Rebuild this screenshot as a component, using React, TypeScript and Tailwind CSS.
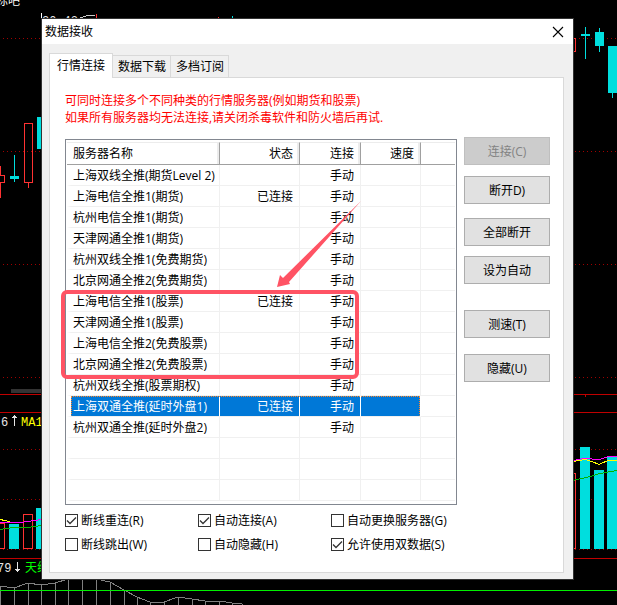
import { useState } from 'react'
import clsx from 'clsx'

interface Server {
  name: string
  status?: string
  mode?: string
}

const SERVERS: Server[] = [
  { name: '上海双线全推(期货Level 2)', mode: '手动' },
  { name: '上海电信全推1(期货)', status: '已连接', mode: '手动' },
  { name: '杭州电信全推1(期货)', mode: '手动' },
  { name: '天津网通全推1(期货)', mode: '手动' },
  { name: '杭州双线全推1(免费期货)', mode: '手动' },
  { name: '北京网通全推2(免费期货)', mode: '手动' },
  { name: '上海电信全推1(股票)', status: '已连接', mode: '手动' },
  { name: '天津网通全推1(股票)', mode: '手动' },
  { name: '上海电信全推2(免费股票)', mode: '手动' },
  { name: '北京网通全推2(免费股票)', mode: '手动' },
  { name: '杭州双线全推(股票期权)', mode: '手动' },
  { name: '上海双通全推(延时外盘1)', status: '已连接', mode: '手动' },
  { name: '杭州双通全推(延时外盘2)', mode: '手动' },
]

// empty rows that fill the rest of the list
const BLANK_ROWS = [0, 1, 2]

const TABS = ['行情连接', '数据下载', '多档订阅']

const COLUMNS = ['服务器名称', '状态', '连接', '速度']

const OPTIONS = [
  { id: 'reconnect', label: '断线重连(R)', checked: true },
  { id: 'auto-connect', label: '自动连接(A)', checked: true },
  { id: 'auto-switch', label: '自动更换服务器(G)', checked: false },
  { id: 'popup', label: '断线跳出(W)', checked: false },
  { id: 'auto-hide', label: '自动隐藏(H)', checked: false },
  { id: 'dual-data', label: '允许使用双数据(S)', checked: true },
]

const WAVE = [
  [0, 586], [14, 588], [28, 583], [41, 585], [55, 583], [68, 579], [82, 577], [96, 579], [110, 582], [124, 590],
  [137, 597], [150, 602], [164, 602], [178, 597], [192, 599], [205, 601], [219, 601], [232, 603], [242, 604],
]

function ChartBackdrop() {
  return (
    <svg
      className="absolute inset-0 h-full w-full"
      viewBox="0 0 617 605"
      preserveAspectRatio="none"
      shapeRendering="crispEdges"
      aria-hidden="true"
    >
      {[38, 151, 264, 377, 449, 499, 549].map((y) => (
        <path key={y} d={`M3 ${y}.5H617`} stroke="#a00000" strokeDasharray="1 3" />
      ))}
      <path d="M0 394.5H617M0 412.5H617M0 558.5H617M585.5 394V397" stroke="#c00000" />
      <rect x="11" y="389" width="30" height="4" fill="#333" />

      {/* candles */}
      <g fill="none" stroke="#ff3232">
        <path d="M0.5 166V175M0.5 183V198M0 175.5H4.5V182.5H0" />
        <path d="M24.5 123.5H32.5V182.5H24.5ZM28.5 183V188" />
        <path d="M96.5 14V18M218.5 17V18M573 38.5H575.5V51.5H573" />
        <path d="M0 523.5H4.5V548.5H0M23.5 514.5H32.5V548.5H23.5ZM573 473.5H575.5V548.5H573" />
      </g>
      <g fill="#00dede">
        <rect x="14" y="155" width="1" height="27" />
        <rect x="10" y="176" width="9" height="3" />
        <rect x="37" y="117" width="5" height="32" />
        <rect x="232" y="16" width="1" height="2" />
        <rect x="585" y="27" width="1" height="32" />
        <rect x="581" y="34" width="9" height="2" />
        <rect x="599" y="28" width="1" height="24" />
        <rect x="595" y="32" width="9" height="14" />
        <rect x="608" y="46" width="9" height="47" />
        <rect x="612" y="93" width="1" height="5" />
        <rect x="9" y="524" width="10" height="25" />
        <rect x="36" y="508" width="6" height="41" />
        <rect x="580" y="447" width="10" height="102" />
        <rect x="594" y="470" width="10" height="79" />
        <rect x="607" y="456" width="10" height="93" />
      </g>

      <g fill="none">
        <path d="M0 519.5L5 520.5L12 522.5M573 461.5L585 459.5L592 461.5L599 464.5L608 460.5H617" stroke="#ff0" />
        <path d="M0 522.5H20L28 521.5L41 519.5M573 460.5L584 458.5L600 459.5L608 456.5H617" stroke="#f0f" />
        <path d="M0 529.5L14 527.5H28L41 525.5M573 480.5L590 476.5L600 473.5L617 470.5" stroke="#00b400" />
        <path d="M41.5 13V18" stroke="#fff" />
        <path d="M80 18L88 15.5H95" stroke="#ccc" />
        <path d={`M${WAVE.map((p) => p.join(' ')).join('L')}`} stroke="#808080" />
        <path d={WAVE.map(([x, y]) => `M${x}.5 ${y}V605`).join('')} stroke="#808080" />
      </g>
      <rect x="0" y="590" width="617" height="1" fill="#00f000" />

      <g stroke="#e6e6e6" fill="none">
        <path d="M14.5 415V426M13 416.5H16M12 417.5H17M17.5 562V572M15 569.5H20M16 570.5H19" />
      </g>
      <g fontSize="12" fill="#e6e6e6" className="font-['Liberation_Mono','Noto_Sans_CJK_SC',monospace]">
        <text x="-4" y="5" fill="#fff">标吧</text>
        <text x="42" y="25">20.43</text>
        <text x="1" y="426">6</text>
        <text x="21" y="426" fill="#ff0">MA1</text>
        <text x="-3" y="572">79</text>
        <text x="25" y="572" fill="#0f0">天线</text>
      </g>
    </svg>
  )
}

// red frame and pointer drawn over the stock servers
function Annotation() {
  return (
    <svg className="pointer-events-none absolute -left-[5px] top-0 h-60 w-80" viewBox="0 0 320 240" fill="none" aria-hidden="true">
      <rect x="2" y="152" width="294" height="85" rx="4" stroke="#ff5364" strokeWidth="4" />
      <path d="M216 147L219 135L222 138L300 61L228 142L229 144Z" fill="#ff5364" />
    </svg>
  )
}

function ServerRow({ server, selected, onSelect }: { server?: Server; selected: boolean; onSelect?: () => void }) {
  const cell = clsx(
    'h-[21px] truncate border-b border-r p-0 pt-[2px] font-normal leading-[18px]',
    selected ? 'border-b-[#f0f0f0] border-r-white bg-[#0078d7] text-white' : 'border-[#f0f0f0]',
  )
  return (
    <tr onClick={onSelect}>
      <td className={clsx(cell, 'border-l-4 border-l-white pl-[2px]')}>{server?.name}</td>
      <td className={clsx(cell, 'pr-[6px] text-right')}>{server?.status}</td>
      <td className={clsx(cell, 'pr-[6px] text-right')}>{server?.mode}</td>
      <td className={cell} />
      <td className="border-b border-[#f0f0f0] p-0" />
    </tr>
  )
}

function ServerTable() {
  const [selected, setSelected] = useState(11)
  return (
    <div className="relative mt-[2px] min-w-0 flex-1 border border-[#828790] px-px pb-[3px] pt-[2px]">
      <table className="w-full table-fixed border-separate border-spacing-0">
        <colgroup>
          <col className="w-[153px]" />
          <col className="w-[80px]" />
          <col className="w-[61px]" />
          <col className="w-[60px]" />
          <col />
        </colgroup>
        <thead>
          <tr>
            {COLUMNS.map((title, i) => (
              <th
                key={title}
                className={clsx(
                  'h-[23px] border-b border-r border-t border-b-[#a0a0a0] border-r-[#a0a0a0] border-t-[#ececec] p-0 font-normal shadow-[inset_-2px_0_0_#ececec]',
                  i === 0 ? 'pl-[6px] text-left' : 'pr-[6px] text-right',
                )}
              >
                {title}
              </th>
            ))}
            <td className="border-b border-t border-b-[#a0a0a0] border-t-[#ececec] p-0" />
          </tr>
        </thead>
        <tbody>
          {SERVERS.map((server, i) => (
            <ServerRow key={server.name} server={server} selected={i === selected} onSelect={() => setSelected(i)} />
          ))}
          {BLANK_ROWS.map((n) => (
            <ServerRow key={n} selected={false} />
          ))}
        </tbody>
      </table>
      {/* focus rectangle of the selected row */}
      <div className="pointer-events-none absolute left-[5px] top-[256px] h-[20px] w-[349px] border border-dotted border-[#ff8728] border-b-transparent" />
      <Annotation />
    </div>
  )
}

function PushButton({ label, disabled, className }: { label: string; disabled?: boolean; className?: string }) {
  return (
    <button
      type="button"
      disabled={disabled}
      className={clsx(
        'h-[28px] w-full border',
        disabled ? 'border-[#bfbfbf] bg-[#ccc] text-[#838383]' : 'border-[#adadad] bg-[#e1e1e1]',
        className,
      )}
    >
      {label}
    </button>
  )
}

function CheckOption({ id, label, checked }: { id: string; label: string; checked: boolean }) {
  return (
    <label htmlFor={id} className="flex h-[24px] items-center gap-[3px] whitespace-nowrap">
      <span className="relative h-[13px] w-[13px] shrink-0">
        <input
          id={id}
          type="checkbox"
          defaultChecked={checked}
          className="peer block h-[13px] w-[13px] appearance-none border border-[#333] bg-white"
        />
        <svg className="pointer-events-none absolute inset-0 hidden peer-checked:block" viewBox="0 0 13 13" fill="none">
          <path d="M2 6.5L5 9.5L11 3.5" stroke="#333" strokeWidth="1.3" />
        </svg>
      </span>
      {label}
    </label>
  )
}

export default function App() {
  const [tab, setTab] = useState(0)

  return (
    <div className="relative min-h-screen overflow-hidden bg-black pb-[25px] pl-[41px] pr-[43px] pt-[18px] font-['Open_Sans','Noto_Sans_CJK_SC',sans-serif] text-[12px] leading-[17px] text-black">
      <ChartBackdrop />

      <div role="dialog" aria-labelledby="dialog-title" className="relative border border-[#333] bg-[#f0f0f0]">
        <header className="flex h-[25px] items-center justify-between bg-white pl-[3px] pr-[9px]">
          <h1 id="dialog-title">数据接收</h1>
          <button type="button" aria-label="关闭">
            <svg className="h-[12px] w-[12px]" viewBox="0 0 12 12" fill="none">
              <path d="M1 1L11 11M11 1L1 11" stroke="#000" strokeWidth="1.1" />
            </svg>
          </button>
        </header>

        <div className="pb-[6px] pl-[7px] pr-[9px] pt-[9px]">
          <div role="tablist" className="relative -mb-px flex items-end">
            {TABS.map((name, i) => (
              <button
                key={name}
                type="button"
                role="tab"
                aria-selected={tab === i}
                onClick={() => setTab(i)}
                className={clsx(
                  'border-[#d9d9d9]',
                  tab === i
                    ? 'h-[25px] border-l border-r border-t bg-white px-[7px] pb-[2px]'
                    : 'h-[23px] border-b border-r border-t bg-[#f0f0f0] pl-[5px] pr-[4px]',
                )}
              >
                {name}
              </button>
            ))}
          </div>

          <main className="border border-[#d9d9d9] bg-white pb-[16px] pl-[15px] pr-[13px] pt-[14px]">
            <p className="text-[#f00]">
              可同时连接多个不同种类的行情服务器(例如期货和股票)
              <br />
              如果所有服务器均无法连接,请关闭杀毒软件和防火墙后再试.
            </p>

            <div className="mt-[11px] flex gap-[7px]">
              <ServerTable />
              <div className="w-[86px] shrink-0">
                <PushButton label="连接(C)" disabled />
                <PushButton label="断开D)" className="mt-[11px]" />
                <PushButton label="全部断开" className="mt-[14px]" />
                <PushButton label="设为自动" className="mt-[10px]" />
                <PushButton label="测速(T)" className="mt-[26px]" />
                <PushButton label="隐藏(U)" className="mt-[16px]" />
              </div>
            </div>

            <div className="mt-[3px] grid grid-cols-[133px_133px_1fr]">
              {OPTIONS.map((option) => (
                <CheckOption key={option.id} {...option} />
              ))}
            </div>
          </main>
        </div>
      </div>
    </div>
  )
}
